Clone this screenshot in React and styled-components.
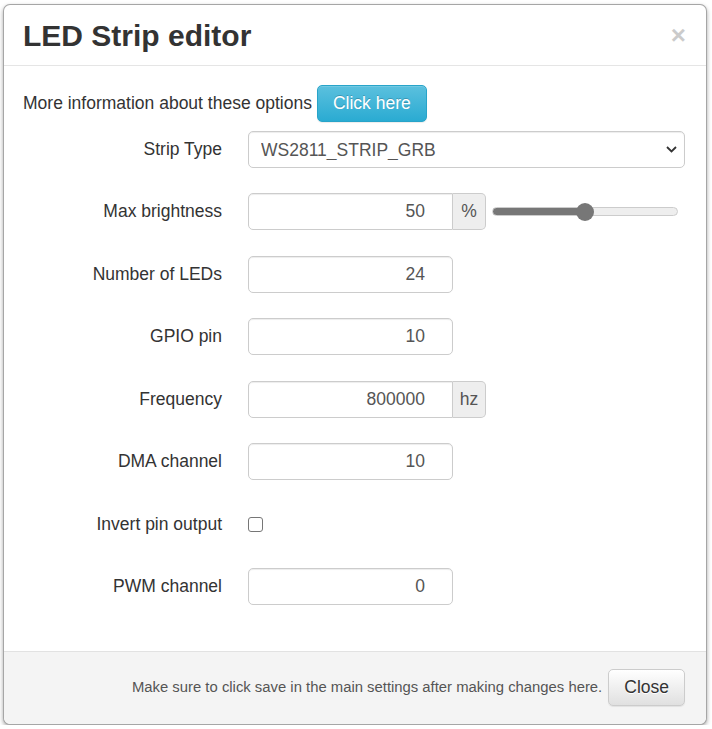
import React from "react";
import styled, { createGlobalStyle } from "styled-components";

const Global = createGlobalStyle`
  html, body { margin: 0; padding: 0; background: #fff; }
  body { font-family: "Liberation Sans", Arial, sans-serif; color: #333; }
  * { box-sizing: border-box; }
`;

const Modal = styled.div`
  width: 704px;
  margin: 4px 0 0 3px;
  background: #fff;
  border: 1px solid rgba(0, 0, 0, 0.35);
  border-radius: 7px;
  box-shadow: 0 2px 4px rgba(0, 0, 0, 0.35);
`;

const Header = styled.div`
  display: flex;
  justify-content: space-between;
  align-items: flex-start;
  padding: 13px 20px 12px 19px;
  border-bottom: 1px solid #e5e5e5;
`;

const Title = styled.h3`
  margin: 0;
  font-size: 30px;
  line-height: 35px;
  font-weight: bold;
  color: #333;
`;

const CloseX = styled.span`
  font-size: 26px;
  font-weight: bold;
  line-height: 26px;
  margin-top: 4px;
  color: #000;
  opacity: 0.2;
`;

const Body = styled.div`
  padding: 19px 21px 46px 19px;
`;

const InfoLine = styled.div`
  display: flex;
  align-items: center;
  gap: 5px;
  font-size: 17.5px;
  color: #333;
  margin-bottom: 9px;
`;

const Button = styled.button`
  font-family: inherit;
  font-size: 17.5px;
  line-height: 23px;
  padding: 6px 15px;
  border-radius: 5px;
  cursor: pointer;
  color: ${(p) => (p.$variant === "info" ? "#fff" : "#333")};
  border: 1px solid ${(p) => (p.$variant === "info" ? "#28a4c9" : "#ccc")};
  background: ${(p) =>
    p.$variant === "info"
      ? "linear-gradient(to bottom, #5bc0de 0%, #2aabd2 100%)"
      : "linear-gradient(to bottom, #fff 0%, #e0e0e0 100%)"};
  box-shadow: inset 0 1px 0 rgba(255, 255, 255, 0.15), 0 1px 1px rgba(0, 0, 0, 0.075);
  text-shadow: ${(p) => (p.$variant === "info" ? "0 -1px 0 rgba(0,0,0,.2)" : "0 1px 0 #fff")};
`;

const Form = styled.div`
  display: flex;
  flex-direction: column;
  gap: 25.43px;
`;

const Row = styled.div`
  display: grid;
  grid-template-columns: 199px 1fr;
  column-gap: 26px;
  align-items: center;
  min-height: 37px;
`;

const Label = styled.label`
  text-align: right;
  font-size: 17.5px;
  color: #333;
`;

const Controls = styled.div`
  display: flex;
  align-items: center;
`;

const SelectWrap = styled.div`
  position: relative;
  width: 100%;
`;

const Select = styled.select`
  appearance: none;
  width: 100%;
  height: 37px;
  padding: 0 30px 0 12px;
  font-family: inherit;
  font-size: 17.5px;
  color: #555;
  background: #fff;
  border: 1px solid #ccc;
  border-radius: 5px;
  box-shadow: inset 0 1px 1px rgba(0, 0, 0, 0.075);
`;

const Chevron = styled.svg`
  position: absolute;
  right: 8px;
  top: 15px;
  pointer-events: none;
`;

const Input = styled.input`
  width: 205px;
  height: 37px;
  padding: 0 27px 0 12px;
  text-align: right;
  font-family: inherit;
  font-size: 17.5px;
  color: #555;
  background: #fff;
  border: 1px solid #ccc;
  border-radius: ${(p) => (p.$grouped ? "5px 0 0 5px" : "5px")};
  box-shadow: inset 0 1px 1px rgba(0, 0, 0, 0.075);
`;

const Addon = styled.span`
  width: 33px;
  height: 37px;
  display: flex;
  align-items: center;
  justify-content: center;
  font-size: 17.5px;
  color: #555;
  background: #eee;
  border: 1px solid #ccc;
  border-left: none;
  border-radius: 0 5px 5px 0;
`;

const Range = styled.input`
  -webkit-appearance: none;
  appearance: none;
  width: 186px;
  height: 18px;
  margin: 0 0 0 6px;
  background: transparent;
  &::-webkit-slider-runnable-track {
    height: 9px;
    border-radius: 5px;
    border: 1px solid #ccc;
    background: linear-gradient(to right, #777 0%, #777 ${(p) => p.$pct}%, #eee ${(p) => p.$pct}%, #eee 100%);
  }
  &::-webkit-slider-thumb {
    -webkit-appearance: none;
    width: 18px;
    height: 18px;
    margin-top: -5.5px;
    border-radius: 50%;
    background: #777;
    border: none;
  }
`;

const Checkbox = styled.input`
  appearance: none;
  width: 15px;
  height: 15px;
  margin: 0;
  border: 1.5px solid #767676;
  border-radius: 3px;
  background: #fff;
`;

const Footer = styled.div`
  display: flex;
  justify-content: flex-end;
  align-items: center;
  gap: 6px;
  padding: 17px 21px 18px;
  background: #f4f4f4;
  border-top: 1px solid #e2e2e2;
  border-radius: 0 0 7px 7px;
`;

const FooterNote = styled.span`
  font-size: 14.85px;
  color: #555;
`;

const NumberField = ({ value, unit }) => (
  <Controls>
    <Input type="text" defaultValue={value} $grouped={!!unit} />
    {unit && <Addon>{unit}</Addon>}
  </Controls>
);

export default function App() {
  return (
    <>
      <Global />
      <Modal>
        <Header>
          <Title>LED Strip editor</Title>
          <CloseX>×</CloseX>
        </Header>
        <Body>
          <InfoLine>
            <span>More information about these options</span>
            <Button $variant="info">Click here</Button>
          </InfoLine>
          <Form>
            <Row>
              <Label>Strip Type</Label>
              <SelectWrap>
                <Select defaultValue="WS2811_STRIP_GRB">
                  <option>WS2811_STRIP_GRB</option>
                  <option>WS2811_STRIP_RGB</option>
                  <option>SK6812_STRIP_GRBW</option>
                </Select>
                <Chevron width="11" height="7" viewBox="0 0 11 7">
                  <path d="M1 1 L5.5 5.5 L10 1" fill="none" stroke="#333" strokeWidth="1.8" />
                </Chevron>
              </SelectWrap>
            </Row>
            <Row>
              <Label>Max brightness</Label>
              <Controls>
                <Input type="text" defaultValue="50" $grouped />
                <Addon>%</Addon>
                <Range type="range" min="0" max="100" defaultValue="50" $pct={50} />
              </Controls>
            </Row>
            <Row>
              <Label>Number of LEDs</Label>
              <NumberField value="24" />
            </Row>
            <Row>
              <Label>GPIO pin</Label>
              <NumberField value="10" />
            </Row>
            <Row>
              <Label>Frequency</Label>
              <NumberField value="800000" unit="hz" />
            </Row>
            <Row>
              <Label>DMA channel</Label>
              <NumberField value="10" />
            </Row>
            <Row>
              <Label>Invert pin output</Label>
              <Controls>
                <Checkbox type="checkbox" />
              </Controls>
            </Row>
            <Row>
              <Label>PWM channel</Label>
              <NumberField value="0" />
            </Row>
          </Form>
        </Body>
        <Footer>
          <FooterNote>Make sure to click save in the main settings after making changes here.</FooterNote>
          <Button>Close</Button>
        </Footer>
      </Modal>
    </>
  );
}
